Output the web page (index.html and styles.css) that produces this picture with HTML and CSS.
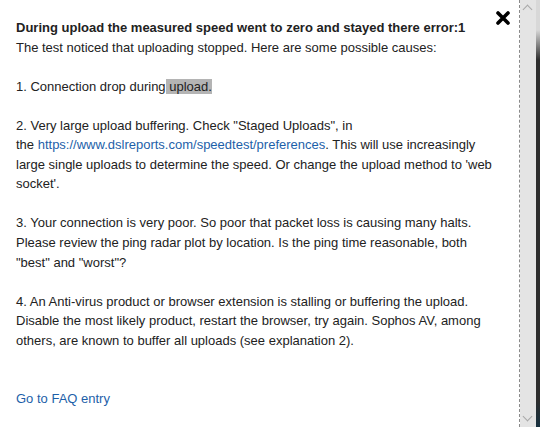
FILE: index.html
```html
<!DOCTYPE html>
<html>
<head>
<meta charset="utf-8">
<link rel="stylesheet" href="styles.css">
</head>
<body>
<div class="frame">
  <div class="content">
    <button class="close" aria-label="Close">
      <svg width="14" height="14" viewBox="0 0 14 14"><path d="M2 2 L12 12 M12 2 L2 12" stroke="#000" stroke-width="3.6" stroke-linecap="round"/></svg>
    </button>
    <p class="lead"><b>During upload the measured speed went to zero and stayed there error:1</b><br>The test noticed that uploading stopped. Here are some possible causes:</p>
    <p>1. Connection drop during<span class="hl"> upload.</span></p>
    <p>2. Very large upload buffering. Check "Staged Uploads", in <span class="nowrap">the <a href="#">https://www.dslreports.com/speedtest/preferences</a>.</span> This will use increasingly large single uploads to determine the speed. Or change the upload method to 'web socket'.</p>
    <p>3. Your connection is very poor. So poor that packet loss is causing many halts. Please review the ping radar plot by location. Is the ping time reasonable, both "best" and "worst"?</p>
    <p class="last">4. An Anti-virus product or browser extension is stalling or buffering the upload. Disable the most likely product, restart the browser, try again. Sophos AV, among others, are known to buffer all uploads (see explanation 2).</p>
    <p><a href="#">Go to FAQ entry</a></p>
  </div>
  <div class="scrollbar">
    <span class="arrow up"></span>
    <span class="arrow down"></span>
  </div>
  <div class="edge"></div>
</div>
</body>
</html>
```

FILE: styles.css
```css
html, body {
  margin: 0;
  padding: 0;
  background: #fff;
}
.frame {
  display: flex;
  width: 540px;
  height: 427px;
  overflow: hidden;
}
.content {
  position: relative;
  width: 483px;
  padding: 18px 20px 0 16px;
  border-right: 1px dashed #8a8a8a;
  font-family: "Liberation Sans", Arial, sans-serif;
  font-size: 13px;
  line-height: 19.55px;
  color: #222;
}
.content p {
  margin: 0 0 19.55px 0;
}
.content p.last {
  margin-bottom: 39.1px;
}
.content a {
  color: #1d5fa9;
  text-decoration: none;
}
.nowrap {
  white-space: nowrap;
}
.hl {
  background: #b4b4b4;
}
.close {
  position: absolute;
  top: 11px;
  right: 9px;
  border: 0;
  padding: 0;
  background: none;
  width: 14px;
  height: 14px;
  line-height: 0;
}
.scrollbar {
  position: relative;
  width: 16px;
  background: #e4e4e4;
}
.arrow {
  position: absolute;
  left: 4px;
  width: 6px;
  height: 6px;
  border-left: 1px solid #a8a8a8;
  border-top: 1px solid #a8a8a8;
}
.arrow.up {
  top: 6px;
  transform: rotate(45deg);
}
.arrow.down {
  bottom: 7px;
  transform: rotate(225deg);
}
.edge {
  width: 4px;
  background: linear-gradient(#d8d8d8 0, #d8d8d8 30px, #2d2d2d 60px, #2d2d2d 400px, #16303f 427px);
}
```
